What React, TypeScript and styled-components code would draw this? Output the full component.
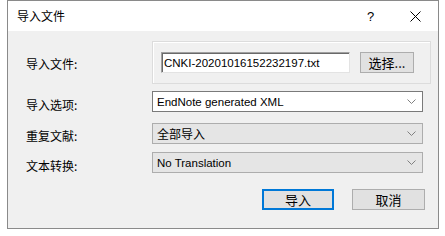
import styled, { createGlobalStyle } from 'styled-components'

const GlobalStyle = createGlobalStyle`
    html, body {
        margin: 0;
        padding: 0;
        background: #ffffff;
    }
    body {
        font-family: "Noto Sans CJK SC", "Liberation Sans", sans-serif;
    }
`

const Page = styled.div`
    padding-left: 7px;
    width: 445px;
    height: 236px;
    box-sizing: border-box;
`

const Window = styled.div`
    width: 432px;
    height: 229px;
    box-sizing: border-box;
    border: 1px solid #8a8a8a;
    display: flex;
    flex-direction: column;
    background: #f0f0f0;
`

const TitleBar = styled.div`
    height: 30px;
    flex: none;
    background: #ffffff;
    display: flex;
    align-items: center;
    padding-left: 9px;
    font-size: 12px;
    color: #000;
`

const TitleText = styled.div`
    flex: 1;
    line-height: 14px;
`

const TitleButton = styled.div`
    width: 45px;
    height: 30px;
    display: flex;
    align-items: center;
    justify-content: center;
    font-family: "Liberation Sans", sans-serif;
    font-size: 13px;
    color: #000;
`

const Body = styled.div`
    flex: 1;
    padding-left: 18px;
    display: flex;
    flex-direction: column;
`

const Row = styled.div<{ $mt: number }>`
    display: flex;
    align-items: flex-start;
    margin-top: ${(p) => p.$mt}px;
`

const Label = styled.div<{ $mt: number }>`
    width: 126px;
    flex: none;
    font-size: 12px;
    line-height: 14px;
    color: #000;
    margin-top: ${(p) => p.$mt}px;
`

const Group = styled.div`
    width: 279px;
    height: 43px;
    box-sizing: border-box;
    border: 1px solid #dcdcdc;
    box-shadow: inset 1px 1px 0 #ffffff;
    display: flex;
    align-items: flex-start;
    padding: 10px 0 0 8px;
    gap: 10px;
`

const TextInput = styled.div`
    width: 189px;
    height: 21px;
    box-sizing: border-box;
    background: #ffffff;
    border-top: 1px solid #a0a0a0;
    border-left: 1px solid #a0a0a0;
    border-right: 1px solid #e3e3e3;
    border-bottom: 1px solid #e3e3e3;
    box-shadow: inset 1px 1px 0 #696969;
    padding-left: 2px;
    display: flex;
    align-items: center;
    font-family: "Liberation Sans", sans-serif;
    font-size: 11.5px;
    color: #000;
`

const Button = styled.div<{ $width: number; $primary?: boolean }>`
    width: ${(p) => p.$width}px;
    height: 21px;
    box-sizing: border-box;
    background: #e1e1e1;
    border: ${(p) => (p.$primary ? '2px solid #0078d7' : '1px solid #adadad')};
    display: flex;
    align-items: center;
    justify-content: center;
    font-size: 13px;
    color: #000;
`

const Combo = styled.div<{ $white?: boolean }>`
    width: 271px;
    height: 21px;
    box-sizing: border-box;
    background: ${(p) => (p.$white ? '#ffffff' : '#e5e5e5')};
    border: 1px solid ${(p) => (p.$white ? '#7a7a7a' : '#adadad')};
    display: flex;
    align-items: center;
    padding: 0 6px 0 4px;
    color: #000;
`

const ComboText = styled.div<{ $latin?: boolean }>`
    flex: 1;
    font-family: ${(p) =>
        p.$latin ? '"Liberation Sans", sans-serif' : '"Noto Sans CJK SC", sans-serif'};
    font-size: ${(p) => (p.$latin ? '11.5px' : '12px')};
`

const Footer = styled.div`
    display: flex;
    justify-content: flex-end;
    gap: 18px;
    padding-right: 13px;
    margin-top: 16px;
`

function Chevron() {
    return (
        <svg width="9" height="6" viewBox="0 0 9 6">
            <path d="M0.5 0.5 L4.5 4.5 L8.5 0.5" fill="none" stroke="#808080" strokeWidth="1" />
        </svg>
    )
}

function CloseIcon() {
    return (
        <svg width="11" height="11" viewBox="0 0 11 11">
            <path d="M0.5 0.5 L10.5 10.5 M10.5 0.5 L0.5 10.5" stroke="#000" strokeWidth="1" />
        </svg>
    )
}

export default function App() {
    return (
        <Page>
            <GlobalStyle />
            <Window>
                <TitleBar>
                    <TitleText>导入文件</TitleText>
                    <TitleButton>?</TitleButton>
                    <TitleButton>
                        <CloseIcon />
                    </TitleButton>
                </TitleBar>
                <Body>
                    <Row $mt={10}>
                        <Label $mt={16}>导入文件:</Label>
                        <Group>
                            <TextInput>CNKI-20201016152232197.txt</TextInput>
                            <Button $width={54}>选择...</Button>
                        </Group>
                    </Row>

                    <Row $mt={7}>
                        <Label $mt={7}>导入选项:</Label>
                        <Combo $white>
                            <ComboText $latin>EndNote generated XML</ComboText>
                            <Chevron />
                        </Combo>
                    </Row>

                    <Row $mt={11}>
                        <Label $mt={6}>重复文献:</Label>
                        <Combo>
                            <ComboText>全部导入</ComboText>
                            <Chevron />
                        </Combo>
                    </Row>

                    <Row $mt={8}>
                        <Label $mt={7}>文本转换:</Label>
                        <Combo>
                            <ComboText $latin>No Translation</ComboText>
                            <Chevron />
                        </Combo>
                    </Row>

                    <Footer>
                        <Button $width={72} $primary>
                            导入
                        </Button>
                        <Button $width={73}>取消</Button>
                    </Footer>
                </Body>
            </Window>
        </Page>
    )
}
